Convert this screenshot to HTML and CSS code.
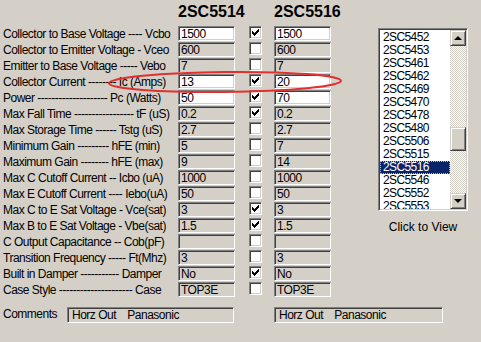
FILE: index.html
```html
<!DOCTYPE html>
<html lang="en">
<head>
    <meta charset="UTF-8">
    <title>Transistor Compare</title>
    <link rel="stylesheet" href="styles.css">
</head>
<body>
    <div class="app">
        <div class="sheet">
            <div class="grid">
                <div></div>
                <h2 class="part-title">2SC5514</h2>
                <div></div>
                <h2 class="part-title">2SC5516</h2>

                <div class="label">Collector to Base Voltage ---- Vcbo</div>
                <input class="field editable" value="1500"><span class="check on"></span><input class="field editable" value="1500">

                <div class="label">Collector to Emitter Voltage - Vceo</div>
                <input class="field" value="600" readonly><span class="check"></span><input class="field" value="600" readonly>

                <div class="label">Emitter to Base Voltage ----- Vebo</div>
                <input class="field" value="7" readonly><span class="check"></span><input class="field" value="7" readonly>

                <div class="label">Collector Current -------- Ic (Amps)</div>
                <input class="field editable" value="13"><span class="check on"></span><input class="field editable" value="20">

                <div class="label">Power -------------------- Pc (Watts)</div>
                <input class="field editable" value="50"><span class="check on"></span><input class="field editable" value="70">

                <div class="label">Max Fall Time ----------------- tF (uS)</div>
                <input class="field" value="0.2" readonly><span class="check on"></span><input class="field" value="0.2" readonly>

                <div class="label">Max Storage Time ------ Tstg (uS)</div>
                <input class="field" value="2.7" readonly><span class="check"></span><input class="field" value="2.7" readonly>

                <div class="label">Minimum Gain --------- hFE (min)</div>
                <input class="field" value="5" readonly><span class="check"></span><input class="field" value="7" readonly>

                <div class="label">Maximum Gain -------- hFE (max)</div>
                <input class="field" value="9" readonly><span class="check"></span><input class="field" value="14" readonly>

                <div class="label">Max C Cutoff Current -- Icbo (uA)</div>
                <input class="field" value="1000" readonly><span class="check"></span><input class="field" value="1000" readonly>

                <div class="label">Max E Cutoff Current ---- Iebo(uA)</div>
                <input class="field" value="50" readonly><span class="check"></span><input class="field" value="50" readonly>

                <div class="label">Max C to E Sat Voltage - Vce(sat)</div>
                <input class="field" value="3" readonly><span class="check on"></span><input class="field" value="3" readonly>

                <div class="label">Max B to E Sat Voltage - Vbe(sat)</div>
                <input class="field" value="1.5" readonly><span class="check on"></span><input class="field" value="1.5" readonly>

                <div class="label">C Output Capacitance -- Cob(pF)</div>
                <input class="field" value="" readonly><span class="check"></span><input class="field" value="" readonly>

                <div class="label">Transition Frequency ----- Ft(Mhz)</div>
                <input class="field" value="3" readonly><span class="check"></span><input class="field" value="3" readonly>

                <div class="label">Built in Damper ----------- Damper</div>
                <input class="field" value="No" readonly><span class="check on"></span><input class="field" value="No" readonly>

                <div class="label">Case Style --------------------- Case</div>
                <input class="field" value="TOP3E" readonly><span class="check"></span><input class="field" value="TOP3E" readonly>
            </div>

            <div class="comments">
                <div class="comments-label">Comments</div>
                <input class="field comment-left" value="Horz Out    Panasonic" readonly>
                <input class="field comment-right" value="Horz Out    Panasonic" readonly>
            </div>
        </div>

        <div class="picker">
            <div class="listbox">
                <ul class="list-items">
                    <li>2SC5452</li>
                    <li>2SC5453</li>
                    <li>2SC5461</li>
                    <li>2SC5462</li>
                    <li>2SC5469</li>
                    <li>2SC5470</li>
                    <li>2SC5478</li>
                    <li>2SC5480</li>
                    <li>2SC5506</li>
                    <li>2SC5515</li>
                    <li class="selected">2SC5516</li>
                    <li>2SC5546</li>
                    <li>2SC5552</li>
                    <li>2SC5553</li>
                </ul>
                <div class="scrollbar">
                    <div class="scroll-btn"><span class="arrow up"></span></div>
                    <div class="track">
                        <div class="thumb"></div>
                    </div>
                    <div class="scroll-btn"><span class="arrow down"></span></div>
                </div>
            </div>
            <div class="picker-caption">Click to View</div>
        </div>
    </div>

    <!-- red marker round the collector current row -->
    <svg class="marker" width="481" height="342" viewBox="0 0 481 342">
        <ellipse cx="225" cy="82" rx="116" ry="10" fill="none" stroke="#e2302f" stroke-width="2" transform="rotate(-0.6 225 82)"/>
    </svg>
</body>
</html>
```

FILE: styles.css
```css
body {
    margin: 0;
    background: #d4d0c8;
    font-family: "Liberation Sans", Arial, sans-serif;
    font-size: 12px;
    letter-spacing: -0.5px;
    color: #000;
    width: 481px;
    height: 342px;
    overflow: hidden;
}

.app {
    display: flex;
    padding-left: 3px;
}

.sheet {
    width: 375px;
    flex: none;
}

.grid {
    display: grid;
    grid-template-columns: 175px 64px 32px 57px;
    grid-template-rows: 26px repeat(17, 16px);
    align-items: start;
}

.part-title {
    margin: 0;
    padding-top: 3px;
    font-size: 16px;
    font-weight: bold;
    line-height: 18px;
    letter-spacing: 0;
    white-space: nowrap;
}

.label {
    line-height: 16px;
    white-space: nowrap;
}

.field {
    box-sizing: border-box;
    width: 57px;
    height: 15px;
    margin: 0;
    padding: 0 0 0 2px;
    border: 1px solid;
    border-color: #808080 #fff #fff #808080;
    box-shadow: inset 1px 1px #404040, inset -1px -1px #d4d0c8;
    background: #d4d0c8;
    font-family: "Liberation Sans", Arial, sans-serif;
    font-size: 12px;
    letter-spacing: -0.5px;
    line-height: 13px;
    color: #000;
    outline: none;
}

.field.editable {
    background: #fff;
}

.check {
    box-sizing: border-box;
    display: block;
    width: 13px;
    height: 13px;
    margin-left: 7px;
    border: 1px solid;
    border-color: #808080 #fff #fff #808080;
    box-shadow: inset 1px 1px #404040, inset -1px -1px #d4d0c8;
    background: #fff;
    position: relative;
}

.check.on::after {
    content: "";
    position: absolute;
    left: 2px;
    top: 2px;
    width: 7px;
    height: 7px;
    background: url("data:image/svg+xml;utf8,<svg xmlns='http://www.w3.org/2000/svg' width='7' height='7'><path d='M0 2h1v1h1v1h1v-1h1v-1h1v-1h1v-1h1v3h-1v1h-1v1h-1v1h-1v1h-1v-1h-1v-1h-1v-1h-1z' fill='black'/></svg>") no-repeat;
}

.comments {
    display: flex;
    align-items: center;
    margin-top: 9px;
}

.comments > * {
    flex: none;
}

.comments-label {
    width: 64px;
    line-height: 16px;
    margin-top: -2px;
}

.field.comment-left {
    width: 167px;
    height: 16px;
    padding-left: 4px;
}

.field.comment-right {
    width: 169px;
    height: 16px;
    margin-left: 40px;
    padding-left: 4px;
}

.picker {
    width: 90px;
    margin-top: 28px;
    flex: none;
}

.listbox {
    box-sizing: border-box;
    display: flex;
    height: 183px;
    border: 1px solid;
    border-color: #808080 #fff #fff #808080;
    box-shadow: inset 1px 1px #404040, inset -1px -1px #d4d0c8;
    padding: 1px;
    background: #fff;
}

.list-items {
    flex: 1;
    margin: 0;
    padding: 1px 0 0;
    list-style: none;
    overflow: hidden;
}

.list-items li {
    height: 13px;
    line-height: 13px;
    padding-left: 3px;
    letter-spacing: -0.6px;
    white-space: nowrap;
}

.list-items li.selected {
    background: #0a246a;
    color: #fff;
    outline: 1px dotted #d8c070;
    outline-offset: -1px;
}

.scrollbar {
    width: 16px;
    display: flex;
    flex-direction: column;
}

.scroll-btn,
.thumb {
    box-sizing: border-box;
    width: 16px;
    height: 16px;
    background: #d4d0c8;
    border: 1px solid;
    border-color: #d4d0c8 #404040 #404040 #d4d0c8;
    box-shadow: inset 1px 1px #fff, inset -1px -1px #808080;
    display: flex;
    align-items: center;
    justify-content: center;
}

.arrow {
    width: 0;
    height: 0;
    border-left: 4px solid transparent;
    border-right: 4px solid transparent;
}

.arrow.up {
    border-bottom: 4px solid #000;
}

.arrow.down {
    border-top: 4px solid #000;
}

.track {
    flex: 1;
    padding-top: 81px;
    background: repeating-conic-gradient(#fff 0 25%, #d4d0c8 0 50%) 0 0 / 2px 2px;
}

.thumb {
    height: 24px;
}

.picker-caption {
    text-align: center;
    margin-top: 9px;
    line-height: 14px;
    letter-spacing: 0;
}

.marker {
    position: absolute;
    left: 0;
    top: 0;
    pointer-events: none;
}
```
